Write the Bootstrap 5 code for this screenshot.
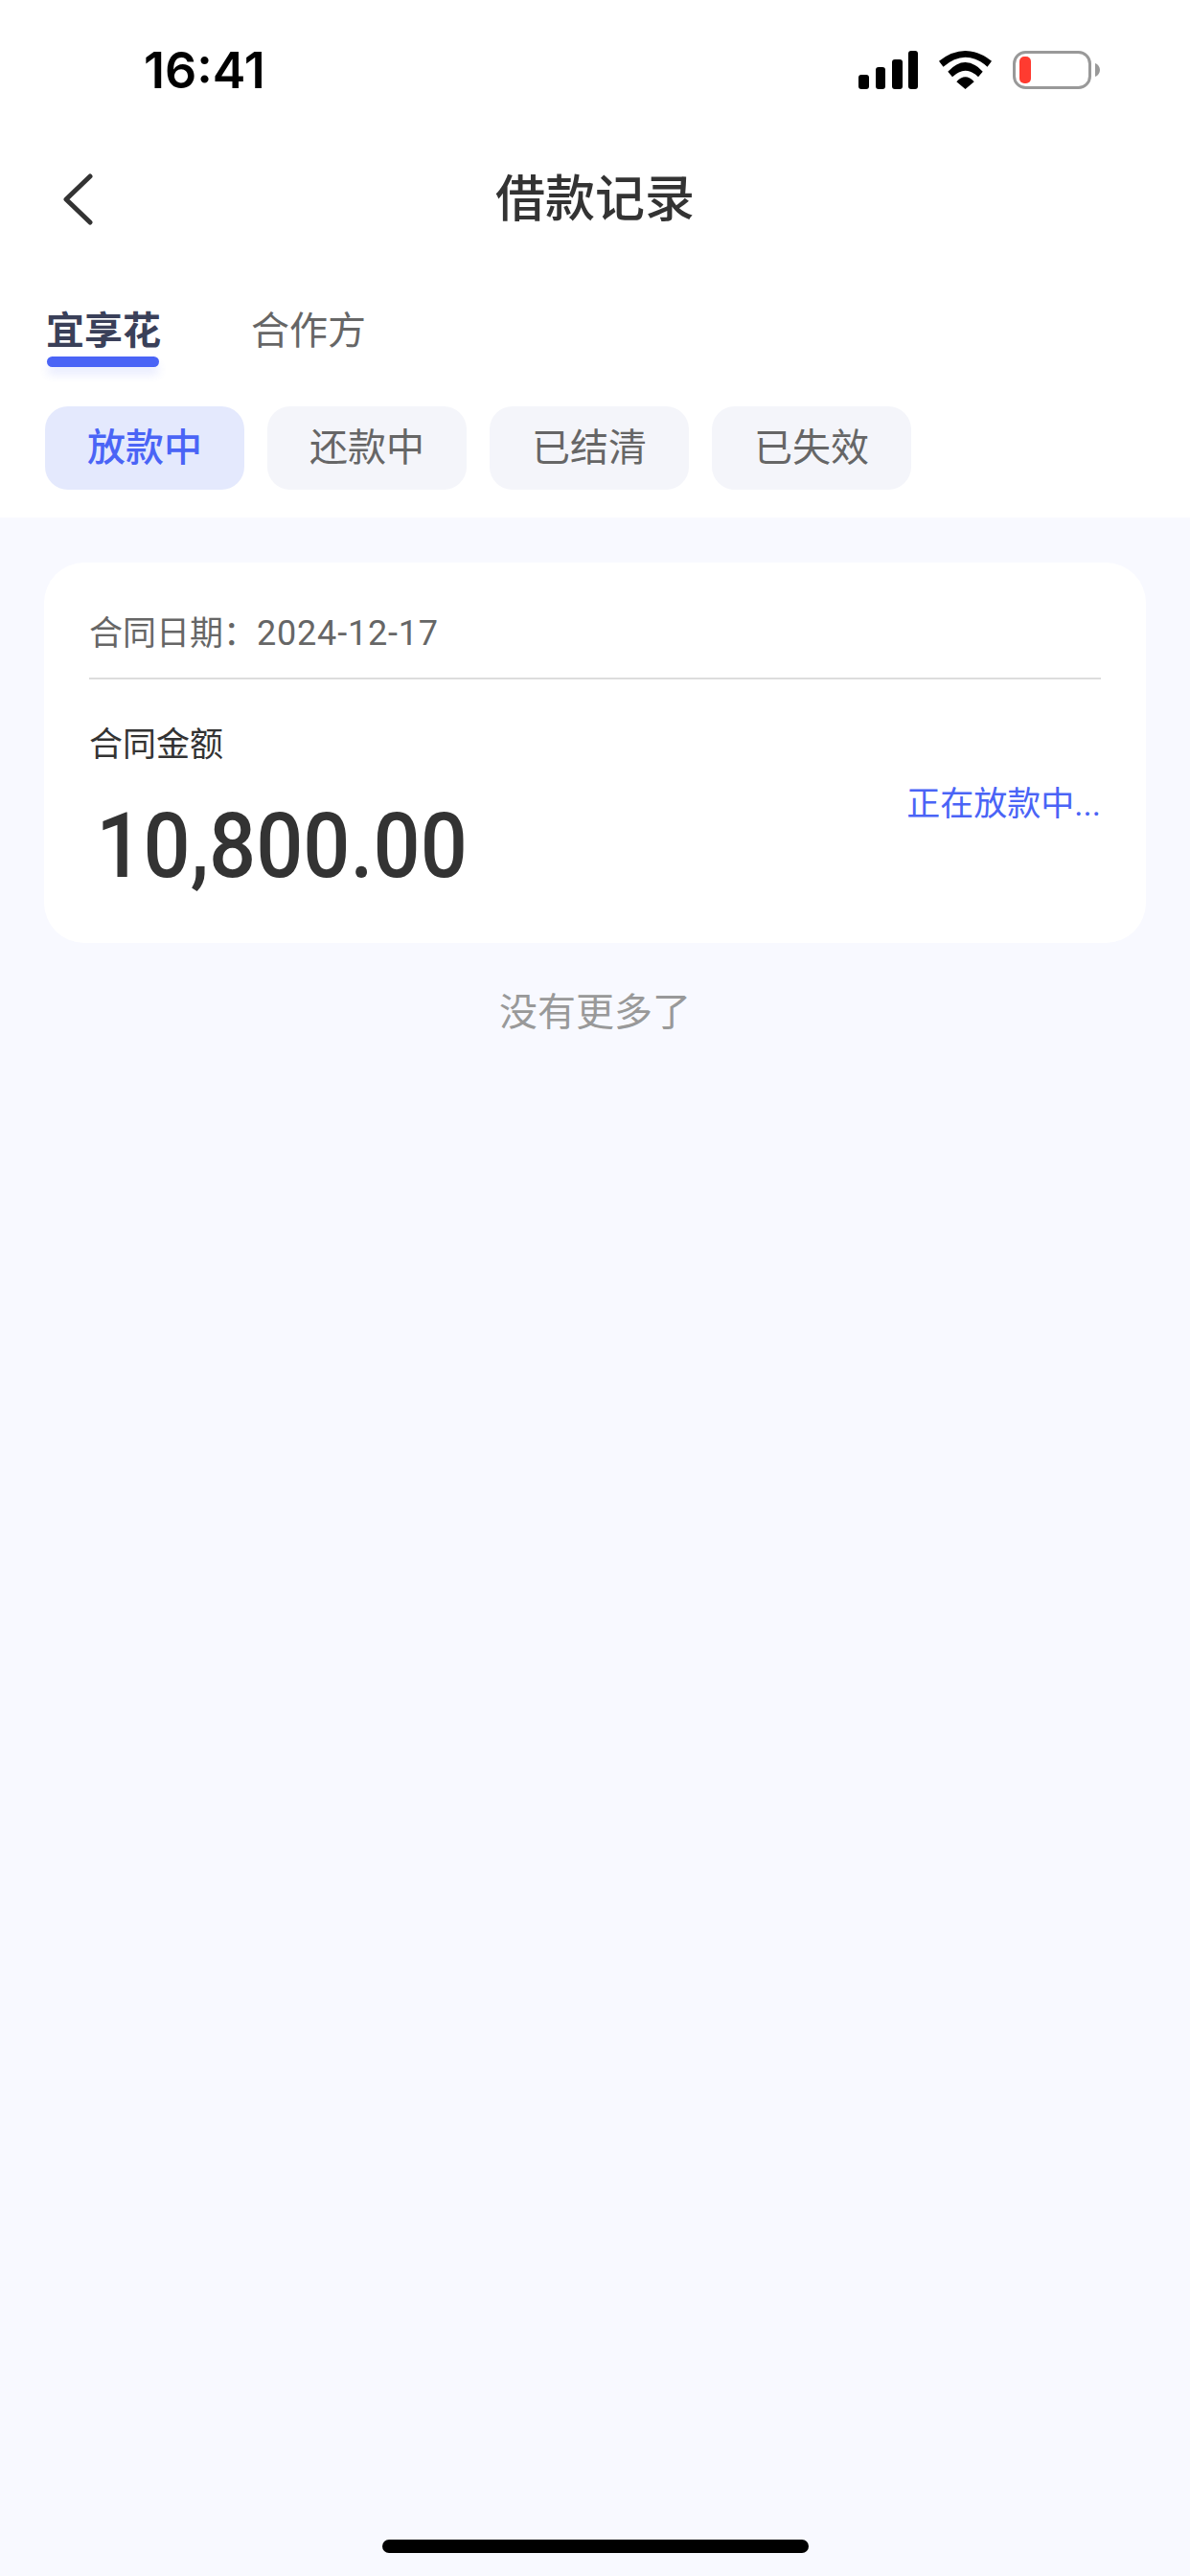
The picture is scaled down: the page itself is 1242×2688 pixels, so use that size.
<!DOCTYPE html>
<html lang="zh-CN">
<head>
  <meta charset="UTF-8" />
  <meta name="viewport" content="width=device-width, initial-scale=1">
  <title>借款记录</title>
  <link href="https://cdn.jsdelivr.net/npm/bootstrap@5.3.0/dist/css/bootstrap.min.css" rel="stylesheet" />
  <style>
    html, body { height: 2688px; overflow: hidden; }
    body {
      background: #f8f9ff;
      font-family: Roboto, "Noto Sans CJK SC", sans-serif;
      color: #333;
    }
    .page { height: 2688px; }
    .head-wrap { background: #fff; height: 540px; }
    .status-bar { height: 148px; padding: 0 94px 0 150px; }
    .clock { font-family: Inter, sans-serif; font-weight: 600; font-size: 52px; color: #000; line-height: 1; }
    .status-icons { gap: 22px; margin-top: -2px; }
    .status-icons svg { display: block; }
    .nav-row { height: 120px; padding-left: 65px; }
    .nav-row svg { position: absolute; left: 65px; top: 33px; }
    .nav-title { font-size: 52px; font-weight: 500; line-height: 122px; color: #333; text-align: center; }
    .tab-row { margin-top: 50px; padding-left: 48px; gap: 95px; }
    .tab-item { font-size: 40px; line-height: 56px; color: #666; width: 119px; white-space: nowrap; }
    .tab-item.on { font-weight: 700; color: #3a4059; }
    .tab-bar {
      height: 11px; margin: -2px 1px 0; border-radius: 6px; background: #4a64f6;
      box-shadow: 0 8px 10px rgba(74, 100, 246, .12);
    }
    .pill-row { margin-top: 41px; padding-left: 47px; gap: 24px; }
    .pill-item {
      width: 208px; height: 87px; border-radius: 24px; background: #f4f5fa; color: #666;
      font-size: 40px; line-height: 87px; text-align: center;
    }
    .pill-item.on { background: #e4e9fd; color: #4a64f6; font-weight: 500; }
    .loan-card { margin: 47px 46px 0; height: 397px; padding: 0 47px; background: #fff; border-radius: 42px; }
    .date-row { padding: 54px 0 25px; font-size: 35px; line-height: 40px; color: #666; border-bottom: 2px solid #ddd; }
    .date-row span { font-size: 36px; letter-spacing: .8px; }
    .amount-label { margin-top: 49px; font-size: 35px; line-height: 40px; color: #333; }
    .amount-num {
      font-size: 94px; font-weight: 500; line-height: 100px; margin-top: 35px; padding-left: 8px; color: #333;
      transform: scaleX(.92); transform-origin: left center;
    }
    .loan-state { font-size: 35px; line-height: 40px; color: #4a64f6; margin-top: 37px; white-space: nowrap; }
    .list-end { margin-top: 53px; font-size: 40px; line-height: 40px; color: #999; text-align: center; }
    .home-bar { width: 445px; height: 14px; border-radius: 7px; background: #000; margin: auto auto 24px; }
  </style>
</head>
<body>
  <div class="page d-flex flex-column">
    <div class="head-wrap">
      <div class="status-bar d-flex align-items-center justify-content-between">
        <div class="clock">16:41</div>
        <div class="status-icons d-flex align-items-center">
          <svg width="62" height="40" viewBox="0 0 62 40" fill="#000">
            <rect x="0" y="25" width="11" height="15" rx="3"/>
            <rect x="18" y="17" width="10" height="23" rx="3"/>
            <rect x="35" y="9" width="11" height="31" rx="3"/>
            <rect x="52" y="0" width="10" height="40" rx="3"/>
          </svg>
          <svg width="55" height="40" viewBox="0 0 55 40" fill="#000">
            <path d="M0 10.700Q27.500 -10.700 55 10.700L50.500 16.700Q27.500 -3.300 4.500 16.700Z"/>
            <path d="M9.300 21.700Q27.500 2.300 45.700 21.700L41 27.300Q27.500 14.100 14 27.300Z"/>
            <path d="M18.300 32.300Q27.500 22.300 36.700 32.300L27.500 40Z"/>
          </svg>
          <svg width="91" height="40" viewBox="0 0 91 40">
            <rect x="1.500" y="1.500" width="79" height="37" rx="12" fill="none" stroke="#999" stroke-width="3"/>
            <rect x="7" y="6" width="12" height="28" rx="5" fill="#ff3b30"/>
            <path d="M86 13C89 14 91 17 91 20S89 26 86 27Z" fill="#999"/>
          </svg>
        </div>
      </div>

      <div class="nav-row position-relative">
        <svg width="32" height="54" viewBox="0 0 32 54" fill="none" stroke="#333" stroke-width="5" stroke-linecap="round" stroke-linejoin="round">
          <path d="M29 3L4 27L29 51"/>
        </svg>
        <div class="nav-title position-absolute top-0 start-0 w-100">借款记录</div>
      </div>

      <div class="tab-row d-flex">
        <div class="tab-item on">宜享花<div class="tab-bar"></div></div>
        <div class="tab-item">合作方</div>
      </div>

      <div class="pill-row d-flex">
        <div class="pill-item on">放款中</div>
        <div class="pill-item">还款中</div>
        <div class="pill-item">已结清</div>
        <div class="pill-item">已失效</div>
      </div>
    </div>

    <div class="loan-card">
      <div class="date-row">合同日期：<span>2024-12-17</span></div>
      <div class="d-flex justify-content-between align-items-center">
        <div>
          <div class="amount-label">合同金额</div>
          <div class="amount-num">10,800.00</div>
        </div>
        <div class="loan-state">正在放款中...</div>
      </div>
    </div>

    <div class="list-end">没有更多了</div>
    <div class="home-bar"></div>
  </div>
</body>
</html>
